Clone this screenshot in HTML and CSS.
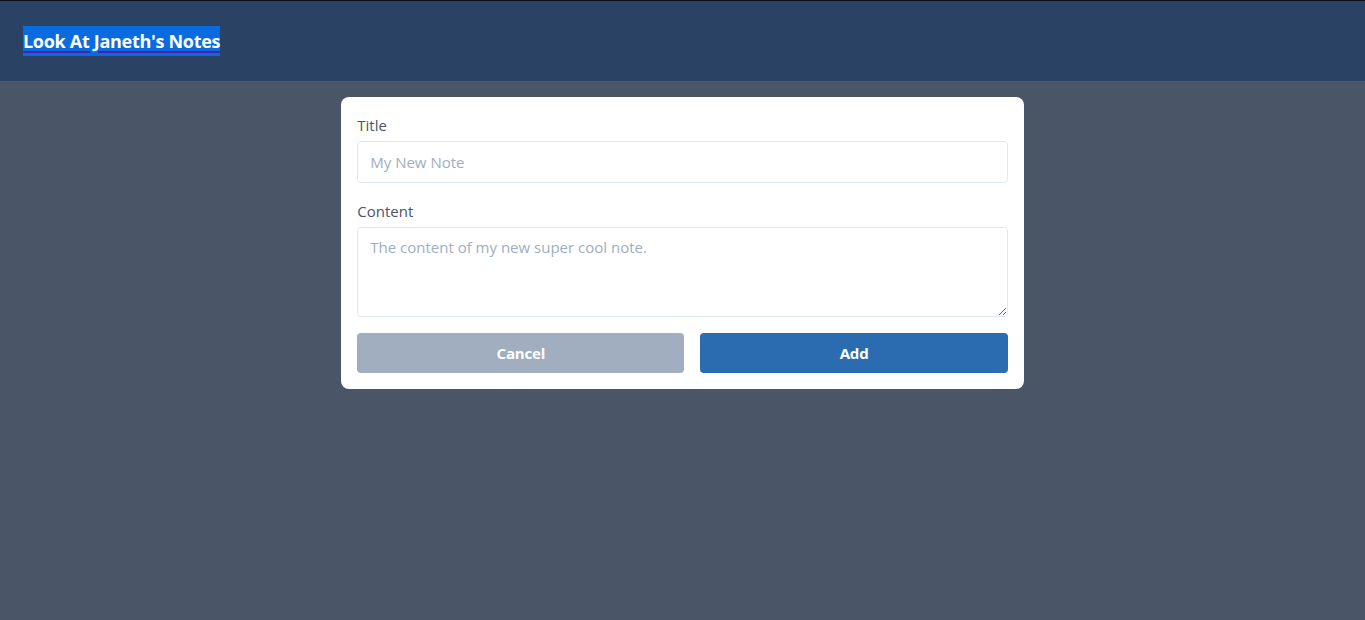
FILE: index.html
```html
<!DOCTYPE html>
<html>
<head>
<meta charset="utf-8">
<link rel="stylesheet" href="styles.css">
</head>
<body>
<header class="topbar">
  <h1 class="brand"><span class="brand-sel">Look At Janeth's Notes</span></h1>
</header>
<main class="page">
  <form class="card">
    <label class="label" for="t">Title</label>
    <input class="field" id="t" type="text" placeholder="My New Note">
    <label class="label" for="c">Content</label>
    <textarea class="field area" id="c" placeholder="The content of my new super cool note."></textarea>
    <div class="actions">
      <button type="button" class="btn btn-cancel">Cancel</button>
      <button type="button" class="btn btn-add">Add</button>
    </div>
  </form>
</main>
</body>
</html>
```
FILE: styles.css
```css
* { box-sizing: border-box; }
html, body { margin: 0; padding: 0; }
body {
  background: #4a5568;
  font-family: "Open Sans", "Noto Sans", sans-serif;
  min-height: 620px;
  border-top: 1px solid #0b0f17;
}
.topbar {
  background: #2a4365;
  height: 80px;
  display: flex;
  align-items: center;
  padding: 0 23px;
}
.brand {
  margin: 0;
  font-size: 18px;
  font-weight: 700;
  letter-spacing: -0.3px;
  line-height: 30px;
  color: #fff;
}
.brand-sel {
  display: inline-block;
  height: 30px;
  line-height: 30px;
  background: #0a6be0;
  text-decoration: underline;
  text-decoration-color: #4b1fa8;
  text-underline-offset: 3px;
  text-decoration-thickness: 2px;
}
.page {
  display: flex;
  justify-content: center;
  padding-top: 16px;
}
.card {
  width: 50%;
  background: #fff;
  border-radius: 8px;
  padding: 16px;
  display: flex;
  flex-direction: column;
}
.label {
  color: #4a5568;
  font-size: 15px;
  line-height: 24px;
  margin-bottom: 4px;
}
.field {
  display: block;
  width: 100%;
  height: 42px;
  border: 1px solid #e2e8f0;
  border-radius: 4px;
  padding: 0 12px;
  font-family: inherit;
  font-size: 15px;
  color: #4a5568;
  margin-bottom: 16px;
  outline: none;
}
.field::placeholder { color: #a0aec0; }
.area {
  height: 90px;
  padding: 9px 12px;
  margin-bottom: 16px;
  resize: vertical;
}
.actions {
  display: flex;
  gap: 16px;
}
.btn {
  flex: 1 1 auto;
  height: 40px;
  border: none;
  border-radius: 4px;
  color: #fff;
  font-family: inherit;
  font-weight: 700;
  font-size: 15px;
  letter-spacing: -0.2px;
}
.btn-cancel { background: #a0aec0; }
.btn-add { background: #2b6cb0; }
```
